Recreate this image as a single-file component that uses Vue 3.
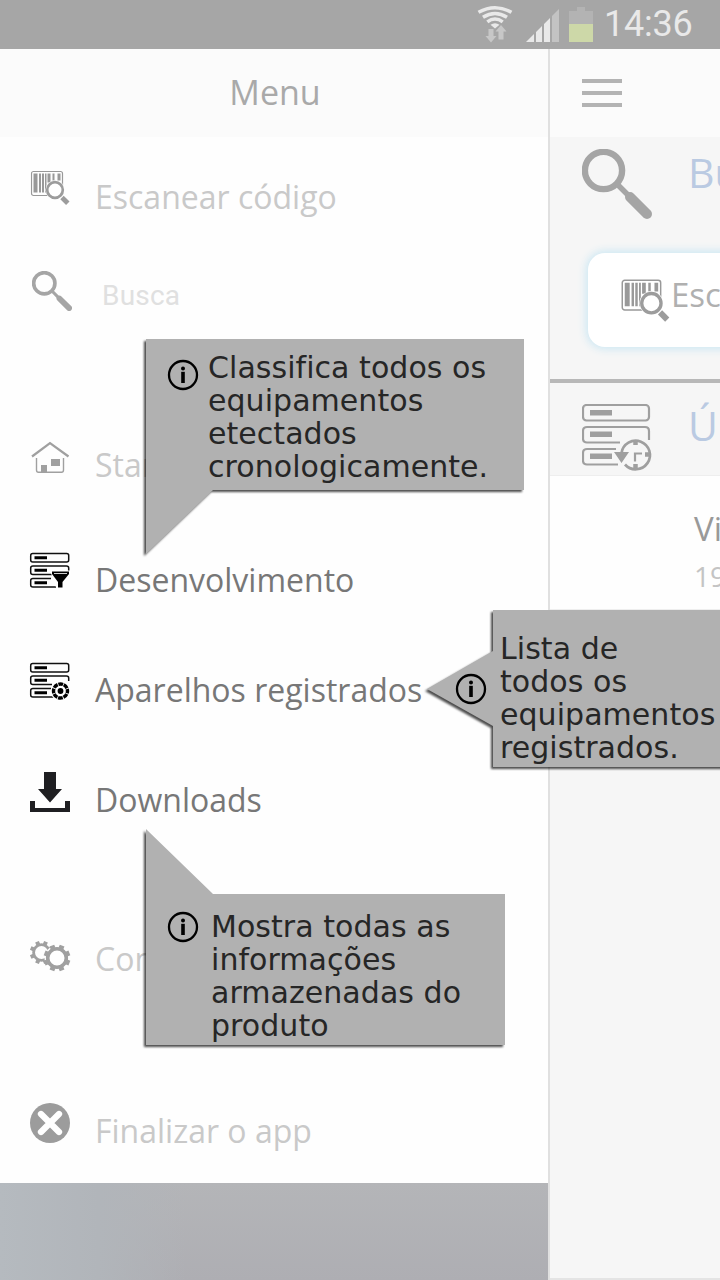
<script setup>
const rows = [
  { id: 'scan', label: 'Escanear código', top: 169, h: 96 },
  { id: 'search', label: 'Busca', top: 265, h: 172, cls: 'hint' },
  { id: 'home', label: 'Star', top: 437, h: 115 },
  { id: 'filter', label: 'Desenvolvimento', top: 552, h: 110, cls: 'on' },
  { id: 'devices', label: 'Aparelhos registrados', top: 662, h: 110, cls: 'on' },
  { id: 'download', label: 'Downloads', top: 772, h: 159, cls: 'on' },
  { id: 'gears', label: 'Con', top: 931, h: 172 },
  { id: 'close', label: 'Finalizar o app', top: 1103, h: 80 },
]
const notes = [
  { id: 'a', lines: ['Classifica todos os', 'equipamentos', 'etectados', 'cronologicamente.'], pts: '6,4 384,4 384,155 73,155 6,219', cx: 43, cy: 40 },
  { id: 'b', lines: ['Lista de', 'todos os', 'equipamentos', 'registrados.'], pts: '73,5 310,5 310,162 73,162 73,121 7,84 73,46', cx: 51, cy: 84 },
  { id: 'c', lines: ['Mostra todas as', 'informações', 'armazenadas do', 'produto'], pts: '6,4 73,69 365,69 365,220 6,220', cx: 43, cy: 102 },
]
const teeth = [0, 45, 90, 135, 180, 225, 270, 315]
</script>

<template>
  <div class="phone">
    <svg class="defs" width="0" height="0">
      <symbol id="barcode" viewBox="0 0 40 36">
        <rect x="1" y="1" width="31" height="24" rx="2" fill="none" stroke="#999" stroke-width="1.2" />
        <path d="M3 3h4v19H3zM8.500 3h2v19h-2zM11.500 3h2v19h-2zM14.500 3h1.500v19h-1.500zM17 3h3v9h-3zM22 3h2v7h-2zM27 3h3v7h-3z" fill="#999" />
        <circle cx="24.5" cy="19.5" r="9.6" fill="#fff" />
        <circle cx="24.5" cy="19.5" r="7.8" fill="#fff" stroke="#9c9c9c" stroke-width="2.700" />
        <path d="M31.500 27l5.800 5.800" stroke="#9c9c9c" stroke-width="4.800" />
      </symbol>
      <symbol id="lens" viewBox="0 0 70 70">
        <circle cx="21.5" cy="21.5" r="18.6" fill="none" stroke="#a5a5a5" stroke-width="6.400" />
        <path d="M35 35l11 11" stroke="#a5a5a5" stroke-width="5.500" />
        <path d="M48 48l17 17" stroke="#a5a5a5" stroke-width="10" stroke-linecap="round" />
      </symbol>
    </svg>

    <header class="status">
      <svg width="250" height="49" viewBox="470 0 250 49">
        <g fill="none" stroke="#e9e9e9" stroke-width="3.500">
          <path d="M478.500 12.300Q495 3 511.500 12.300" />
          <path d="M483 17.300Q495 9.700 507 17.300" />
          <path d="M487.300 21.800Q495 16.200 502.700 21.800" />
        </g>
        <path d="M490.500 24.800Q495 21.500 499.500 24.800L495 28.500z" fill="#e9e9e9" />
        <path d="M488.500 29h5v7h3l-5.500 6.500-5.500-6.500h3zM498.500 39.500v-8h-3l5.500-6.500 5.500 6.500h-3v8z" fill="#c7c7c7" />
        <path d="M526 42l8-8v8zM536 32l6-6v16h-6zM544 24l6-6v24h-6z" fill="#e9e9e9" />
        <path d="M552 16l7-7v33h-7z" fill="#c3c3c3" />
        <path d="M569 11h8V7h8v4h8v13h-24z" fill="#b3b3b3" />
        <path d="M569 24h24v18h-24z" fill="#cdd8a8" />
      </svg>
      <span class="clock">14:36</span>
    </header>

    <div class="body">
      <aside class="drawer">
        <h1>Menu</h1>
        <nav>
          <div v-for="r in rows" :key="r.id" class="row" :class="r.cls" :style="{ height: r.h + 'px' }">
            <svg class="ico" width="50" height="60" :viewBox="`25 ${r.top} 50 60`">
              <use v-if="r.id === 'scan'" href="#barcode" x="30.500" y="170.500" width="40" height="36" />
              <use v-if="r.id === 'search'" href="#lens" x="32" y="271" width="40" height="40" />
              <g v-if="r.id === 'home'" fill="none" stroke="#a0a0a0">
                <path d="M32 456.500L50 443l18.500 13.500" stroke-width="2.200" />
                <path d="M36.500 458v12q0 2.300 2 2.300h23q2 0 2-2.300v-12" stroke-width="1.400" />
                <path d="M41 465h6v7h-6zM51 459h9v7h-9z" fill="#a0a0a0" stroke="none" />
              </g>
              <g v-if="r.id === 'filter' || r.id === 'devices'" :transform="`translate(30 ${r.id === 'filter' ? 552 : 662})`">
                <g fill="none" stroke="#111" stroke-width="1.500">
                  <rect x=".7" y="1.500" width="38" height="8.500" rx="2" />
                  <path d="M22 22.500H3q-2.300 0-2.300-2V16q0-2 2.300-2h33.500q2.200 0 2.200 2v3" />
                  <path d="M26 35H3q-2.300 0-2.300-2v-4.500q0-2 2.300-2h18" />
                </g>
                <path d="M4.500 4.300H17v3H4.500zM4.500 16.800H17v3H4.500zM4.500 29.300H17v3H4.500z" />
                <template v-if="r.id === 'filter'">
                  <path d="M20 18.500h21v4l-7 8V38h-7z" fill="#fff" />
                  <path d="M22 19.500h17v2.500L32.500 30v5.500h-4.500V30L22 22z" />
                  <path d="M24 21.500h13" stroke="#fff" stroke-width=".8" />
                </template>
                <template v-else>
                  <circle cx="30.500" cy="29" r="10" fill="#fff" />
                  <circle cx="30.500" cy="29" r="7" fill="none" stroke="#000" stroke-width="3.400" stroke-dasharray="4.700 .8" stroke-dashoffset="2.350" />
                  <circle cx="30.500" cy="29" r="2.900" />
                </template>
              </g>
              <path v-if="r.id === 'download'" d="M44 772h12v17h6l-12 13.500L38 789h6zM30 801h5v7h30v-7h5v11H30z" fill="#1f1f22" />
              <g v-if="r.id === 'gears'" fill="none" stroke="#a0a0a0">
                <circle cx="41.500" cy="952.500" r="7.900" stroke-width="2.800" />
                <path v-for="t in teeth" :key="t" :transform="`rotate(${t + 22.500} 41.500 952.500)`" d="M39.500 942.500h4" stroke-width="3.400" />
                <circle cx="57" cy="958" r="12.500" fill="#fff" stroke="none" />
                <circle cx="57" cy="958" r="9.300" stroke-width="3.600" />
                <path v-for="t in teeth" :key="'b' + t" :transform="`rotate(${t + 22.500} 57 958)`" d="M54.500 946.200h5" stroke-width="3.200" />
              </g>
              <g v-if="r.id === 'close'">
                <circle cx="50" cy="1123" r="20" fill="#9c9c9c" />
                <path d="M41 1114l18 18m0-18l-18 18" stroke="#fff" stroke-width="6.300" stroke-linecap="round" />
              </g>
            </svg>
            <span>{{ r.label }}</span>
          </div>
        </nav>
        <div class="foot"></div>
      </aside>

      <main>
        <div class="bar"><i></i><i></i><i></i></div>
        <section class="find">
          <div class="title">
            <svg width="70" height="70"><use href="#lens" width="70" height="70" /></svg>
            <b>Bu</b>
          </div>
          <div class="box">
            <svg width="48" height="44" overflow="visible"><use href="#barcode" width="49.600" height="44.600" /></svg>
            <span>Esc</span>
          </div>
        </section>
        <section class="last">
          <svg width="72" height="68" viewBox="0 0 72 68">
            <g fill="none" stroke="#9f9f9f" stroke-width="2.200">
              <rect x="1" y="1" width="66" height="15.500" rx="3.500" />
              <path d="M38 38.500H5q-4 0-4-4V27q0-4 4-4h58q4 0 4 4v9" />
              <path d="M36 60.500H5q-4 0-4-4V49q0-4 4-4h29" />
              <path d="M39.500 49a14.300 14.300 0 1 1 3.500 11.500" stroke-width="2.700" />
              <path d="M53 57.500v-8h7" stroke-width="2.200" />
              <path d="M53.500 36v5M53.500 60v5M63 50.500h5" stroke-width="4.500" />
            </g>
            <path d="M8 6h22v5.500H8zM8 27.500h22V33H8zM8 49.500h22V55H8zM32 48h15l-7.500 11z" fill="#9f9f9f" />
          </svg>
          <b>Ú</b>
        </section>
        <section class="entry"><p>Vi</p><small>19</small></section>
        <div class="rest"></div>
      </main>
    </div>

    <div v-for="n in notes" :key="n.id" class="note" :class="n.id">
      <svg class="shape"><polygon :points="n.pts" fill="#b1b1b1" /></svg>
      <svg class="shape flat" fill="none" stroke="#000">
        <circle :cx="n.cx" :cy="n.cy" r="14" stroke-width="2.300" />
        <path :d="`M${n.cx} ${n.cy - 3.2}v11.200`" stroke-width="3.600" />
        <circle :cx="n.cx" :cy="n.cy - 6.500" r="2" fill="#000" stroke="none" />
      </svg>
      <p><span v-for="l in n.lines" :key="l">{{ l }}</span></p>
    </div>
  </div>
</template>

<style>
body { margin: 0; }
</style>

<style scoped>
.phone { position: relative; width: 720px; height: 1280px; overflow: hidden; background: #fff; font-family: "Open Sans", sans-serif; display: flex; flex-direction: column; }
.defs { position: absolute; }
.status { height: 49px; flex: none; background: #a6a6a6; display: flex; justify-content: flex-end; position: relative; }
.clock { position: absolute; left: 604px; top: 0; font: 36px/48px Roboto, sans-serif; letter-spacing: -.2px; color: #e9e9e9; }
.body { flex: 1; display: flex; min-height: 0; }
.drawer { width: 548px; flex: none; display: flex; flex-direction: column; background: #fefefe; }
h1 { margin: 0; height: 88px; background: #fbfbfb; font-weight: 400; font-size: 34px; line-height: 87px; text-align: center; color: #a9a9a9; padding-left: 2px; box-sizing: border-box; }
nav { padding-top: 32px; }
.row { display: flex; align-items: flex-start; padding-left: 25px; box-sizing: border-box; font-size: 32px; line-height: 55px; color: #c9c9c9; white-space: nowrap; }
.row span { margin-left: 20px; }
.row.on { color: #777; }
.row.hint { font-family: Roboto, sans-serif; font-size: 28px; line-height: 62px; color: #e0e0e0; }
.row.hint span { margin-left: 27px; letter-spacing: .2px; }
.ico, .find svg, .last svg { flex: none; }
.foot { flex: 1; background: linear-gradient(90deg, #b5babf, #b1b5ba 18%, transparent 34%), linear-gradient(#b4b5b8, #aeaeb3); }
main { flex: 1; min-width: 0; overflow: hidden; display: flex; flex-direction: column; background: #fefefe; border-left: 2px solid #e0e0e0; }
.bar { height: 88px; flex: none; background: #fbfbfb; display: flex; flex-direction: column; gap: 8px; padding: 30px 0 0 32px; box-sizing: border-box; }
.bar i { width: 40px; height: 4px; background: #b3b3b3; }
.find { height: 246px; flex: none; box-sizing: border-box; background: #f6f6f6; border-bottom: 4px solid #b8b8b8; padding: 12px 0 0 32px; overflow: hidden; }
.title { display: flex; gap: 36px; height: 104px; }
b { font-weight: 400; font-size: 41px; line-height: 46px; color: #bacae2; }
.box { width: 300px; height: 94px; margin-left: 6px; border-radius: 17px; background: #fff; box-shadow: 0 0 9px 2px #cbe7f3; display: flex; align-items: flex-start; padding: 26px 0 0 33px; box-sizing: border-box; font-size: 33px; line-height: 32px; color: #b0b0b0; }
.box span { margin-left: 2px; }
.last { height: 93px; flex: none; box-sizing: border-box; background: #f6f6f6; border-bottom: 1px solid #eee; padding: 21px 0 0 32px; display: flex; gap: 34px; white-space: nowrap; }
.last b { line-height: 43px; }
.entry { height: 133px; flex: none; box-sizing: border-box; padding: 32px 0 0 144px; }
.entry p { margin: 0; font-size: 33px; line-height: 42px; color: #999; }
.entry small { display: block; font-size: 28px; line-height: 33px; margin-top: 10px; color: #c4c4c4; }
.rest { flex: 1; background: #f6f6f6; border-top: 1px solid #eee; border-bottom: 2px solid #e4e4e4; }
.note { position: absolute; width: 400px; height: 230px; }
.a { left: 140px; top: 335px; }
.b { left: 420px; top: 605px; }
.c { left: 140px; top: 825px; }
.shape { position: absolute; left: 0; top: 0; width: 400px; height: 230px; overflow: visible; filter: drop-shadow(-2px 2px 1.200px rgba(0, 0, 0, .7)); }
.flat { filter: none; }
.note p { position: relative; margin: 0; font: 30px/33px "DejaVu Sans", sans-serif; letter-spacing: .05px; font-variant-ligatures: none; color: #262626; white-space: nowrap; }
.note p span { display: block; }
.a p { padding: 16px 0 0 68px; }
.b p { padding: 27px 0 0 80px; }
.c p { padding: 85px 0 0 71px; }
</style>
